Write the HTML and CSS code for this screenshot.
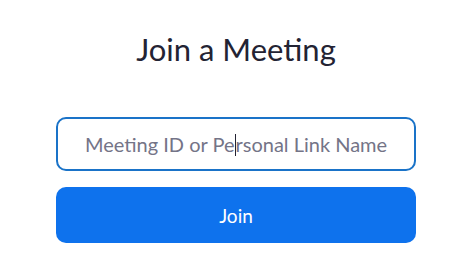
FILE: index.html
```html
<!DOCTYPE html>
<html lang="en">
<head>
    <meta charset="UTF-8">
    <title>Join a Meeting</title>
    <link rel="stylesheet" href="styles.css">
</head>
<body>
    <main class="join-page">
        <h1 class="title">Join a Meeting</h1>
        <div class="meeting-input">
            <span class="placeholder">Meeting ID or Pe<span class="caret"></span>rsonal Link Name</span>
        </div>
        <button class="join-button">Join</button>
    </main>
</body>
</html>
```
FILE: styles.css
```css
body {
    margin: 0;
    background-color: #fff;
    font-family: 'Lato', 'Liberation Sans', sans-serif;
}

.join-page {
    width: 360px;
    margin: 0 auto;
    padding-top: 29px;
    display: flex;
    flex-direction: column;
}

.title {
    margin: 0;
    font-size: 31px;
    font-weight: 400;
    color: #232333;
    text-align: center;
    line-height: 40px;
}

.meeting-input {
    margin-top: 48px;
    height: 54px;
    box-sizing: border-box;
    border: 2px solid #1a73c8;
    border-radius: 10px;
    display: flex;
    align-items: center;
    justify-content: center;
}

.placeholder {
    font-size: 20px;
    color: #747487;
}

.caret {
    display: inline-block;
    width: 1px;
    height: 22px;
    background-color: #232333;
    vertical-align: -4px;
}

.join-button {
    margin-top: 16px;
    height: 56px;
    border: none;
    border-radius: 10px;
    background-color: #0e72ed;
    color: #fff;
    font-family: inherit;
    font-size: 19px;
    cursor: pointer;
}
```
